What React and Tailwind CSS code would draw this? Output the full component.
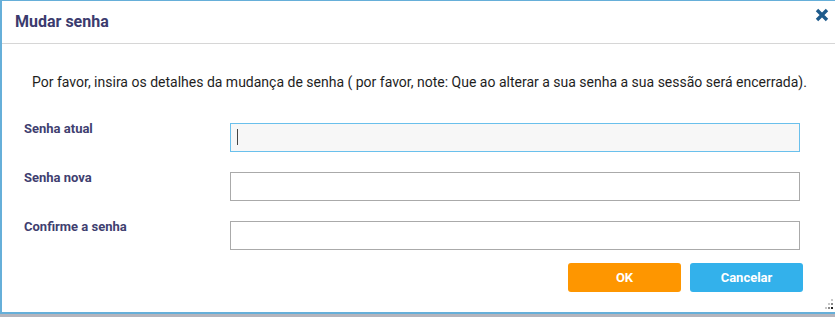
import React from 'react';

const fields = [
    { label: 'Senha atual', focused: true },
    { label: 'Senha nova' },
    { label: 'Confirme a senha' },
];

const ResizeGrip = () => (
    <svg width="12" height="12" viewBox="0 0 12 12" className="absolute right-[1px] bottom-[2px]">
        <rect x="9" y="1" width="2" height="2" fill="#c8c8c8" />
        <rect x="6" y="5" width="2" height="2" fill="#c8c8c8" />
        <rect x="9" y="5" width="2" height="2" fill="#8a8a8a" />
        <rect x="3" y="9" width="2" height="2" fill="#c8c8c8" />
        <rect x="6" y="9" width="2" height="2" fill="#8a8a8a" />
        <rect x="9" y="9" width="2" height="2" fill="#222" />
    </svg>
);

export default function App() {
    return (
        <div className="w-[835px] h-[317px] bg-[#b4b4bc] font-['Roboto',_sans-serif]">
            <div className="relative h-[314px] bg-white border-t border-l-2 border-b-2 border-[#66afd9]">
                <div className="h-[43px] flex items-center justify-between pl-[13px] pr-[5px] border-b border-[#d6d6d6]">
                    <h3 className="text-[16px] font-bold text-[#3b3b6e]">Mudar senha</h3>
                    <button className="w-[16px] h-[16px] -mt-[14px] flex items-center justify-center">
                        <svg width="14" height="14" viewBox="0 0 14 14">
                            <path d="M2 2 L12 12 M12 2 L2 12" stroke="#1e5b8c" strokeWidth="3.4" strokeLinecap="butt" />
                        </svg>
                    </button>
                </div>
                <p className="mt-[28px] pl-[30px] text-[14px] leading-[20px] text-[#1e1e1e]">
                    Por favor, insira os detalhes da mudança de senha ( por favor, note: Que ao alterar a sua senha a sua sessão será encerrada).
                </p>
                <div className="mt-[31px] pl-[22px] pr-[35px] flex flex-col gap-[20px]">
                    {fields.map(f => (
                        <div key={f.label} className="flex items-start">
                            <label className="w-[206px] -mt-[3px] text-[13px] leading-[18px] font-bold text-[#3f3f70]">{f.label}</label>
                            <div className="relative flex-1">
                                <input
                                    type="password"
                                    className={`w-full h-[29px] outline-none border ${f.focused ? 'bg-[#f7f7f7] border-[#6ac0ec]' : 'bg-white border-[#aaaaaa]'}`}
                                />
                                {f.focused && <span className="absolute left-[7px] top-[6px] w-[1px] h-[16px] bg-[#444]" />}
                            </div>
                        </div>
                    ))}
                </div>
                <div className="mt-[13px] pr-[32px] flex justify-end gap-[9px]">
                    <button className="w-[113px] h-[29px] rounded-[3px] bg-[#fe9600] text-white text-[13px] font-bold">OK</button>
                    <button className="w-[113px] h-[29px] rounded-[3px] bg-[#33b1eb] text-white text-[13px] font-bold">Cancelar</button>
                </div>
                <ResizeGrip />
            </div>
        </div>
    );
}
